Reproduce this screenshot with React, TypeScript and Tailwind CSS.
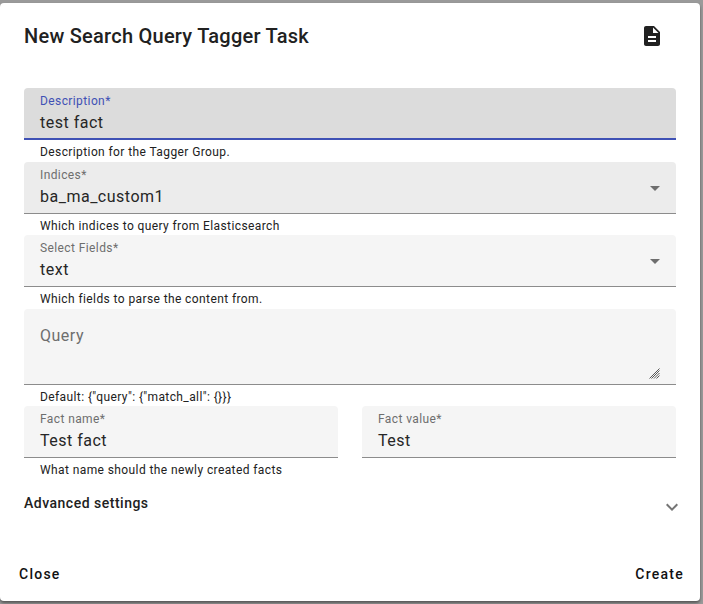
interface FieldProps {
  label: string;
  value: string;
  hint?: string;
  focused?: boolean;
  select?: boolean;
  bg?: string;
}

function Hint({ text }: { text: string }) {
  return <div className="h-[21.5px] px-4 pt-[4px] text-xs leading-[16px] tracking-[0.4px] text-[#212121]">{text}</div>;
}

function Field({ label, value, hint, focused, select, bg = "bg-[#f5f5f5]" }: FieldProps) {
  return (
    <div>
      <div
        className={`relative h-[52px] rounded-t px-4 pt-[5px] ${
          focused ? "border-b-2 border-[#3f51b5] bg-[#dcdcdc]" : `border-b border-[#8c8c8c] ${bg}`
        }`}
      >
        <div className={`text-xs leading-[16px] tracking-[0.4px] ${focused ? "text-[#3f51b5]" : "text-[#6e6e6e]"}`}>
          {label}
        </div>
        <div className="mt-[2px] text-base leading-[24px] tracking-[0.5px] text-[#262626]">{value}</div>
        {select && (
          <svg className="absolute right-[9px] top-[14px] h-6 w-6 text-[#6e6e6e]" viewBox="0 0 24 24" fill="currentColor">
            <path d="M7 10l5 5 5-5z" />
          </svg>
        )}
      </div>
      {hint && <Hint text={hint} />}
    </div>
  );
}

export default function App() {
  return (
    <div className="h-[604px] w-[703px] overflow-hidden bg-[#9a9a9a] pt-[3px] font-['Roboto',sans-serif]">
      <div className="flex h-[598px] w-[700px] flex-col rounded bg-white px-6 pb-[17px] shadow-[0_2px_3px_rgba(0,0,0,0.45)]">
        <div className="flex h-[85px] shrink-0 items-start justify-between">
          <h2 className="mt-[20px] text-xl font-medium leading-[26px] tracking-[0.25px] text-[#212121]">
            New Search Query Tagger Task
          </h2>
          <svg className="mt-[21px] mr-[12px] h-6 w-6 text-[#212121]" viewBox="0 0 24 24" fill="currentColor">
            <path d="M14 2H6c-1.1 0-2 .9-2 2v16c0 1.1.9 2 2 2h12c1.1 0 2-.9 2-2V8l-6-6zm2 16H8v-2h8v2zm0-4H8v-2h8v2zm-3-5V3.5L18.5 9H13z" />
          </svg>
        </div>

        <Field label="Description*" value="test fact" hint="Description for the Tagger Group." focused />
        <Field label="Indices*" value="ba_ma_custom1" hint="Which indices to query from Elasticsearch" select bg="bg-[#ececec]" />
        <Field label="Select Fields*" value="text" hint="Which fields to parse the content from." select />

        <div className="relative h-[76px] shrink-0 rounded-t border-b border-[#8c8c8c] bg-[#f5f5f5] px-4 pt-[15px] text-base leading-[24px] tracking-[0.5px] text-[#6e6e6e]">
          Query
          <svg className="absolute bottom-[5px] right-[16px] h-[11px] w-[11px] text-[#5a5a5a]" viewBox="0 0 11 11" stroke="currentColor" strokeWidth="1">
            <path d="M0.5 10.5L10.5 0.5M2.5 10.5L10.5 2.5M5 10.5L10.5 5M7.5 10.5L10.5 7.5" />
          </svg>
        </div>
        <Hint text={'Default: {"query": {"match_all": {}}}'} />

        <div className="grid grid-cols-2 gap-6">
          <Field label="Fact name*" value="Test fact" hint="What name should the newly created facts" />
          <Field label="Fact value*" value="Test" />
        </div>

        <div className="mt-[12px] flex items-start justify-between">
          <span className="mt-[1px] text-sm font-medium leading-[20px] tracking-[0.5px] text-[#212121]">Advanced settings</span>
          <svg className="mr-[-8px] mt-[3px] h-6 w-6 text-[#757575]" viewBox="0 0 24 24" fill="currentColor">
            <path d="M16.59 8.59L12 13.17 7.41 8.59 6 10l6 6 6-6z" />
          </svg>
        </div>

        <div className="mt-auto flex justify-between">
          <button className="ml-[-5px] text-sm font-medium leading-[20px] tracking-[1.25px] text-[#111]">Close</button>
          <button className="mr-[-8px] text-sm font-medium leading-[20px] tracking-[1.25px] text-[#111]">Create</button>
        </div>
      </div>
    </div>
  );
}
